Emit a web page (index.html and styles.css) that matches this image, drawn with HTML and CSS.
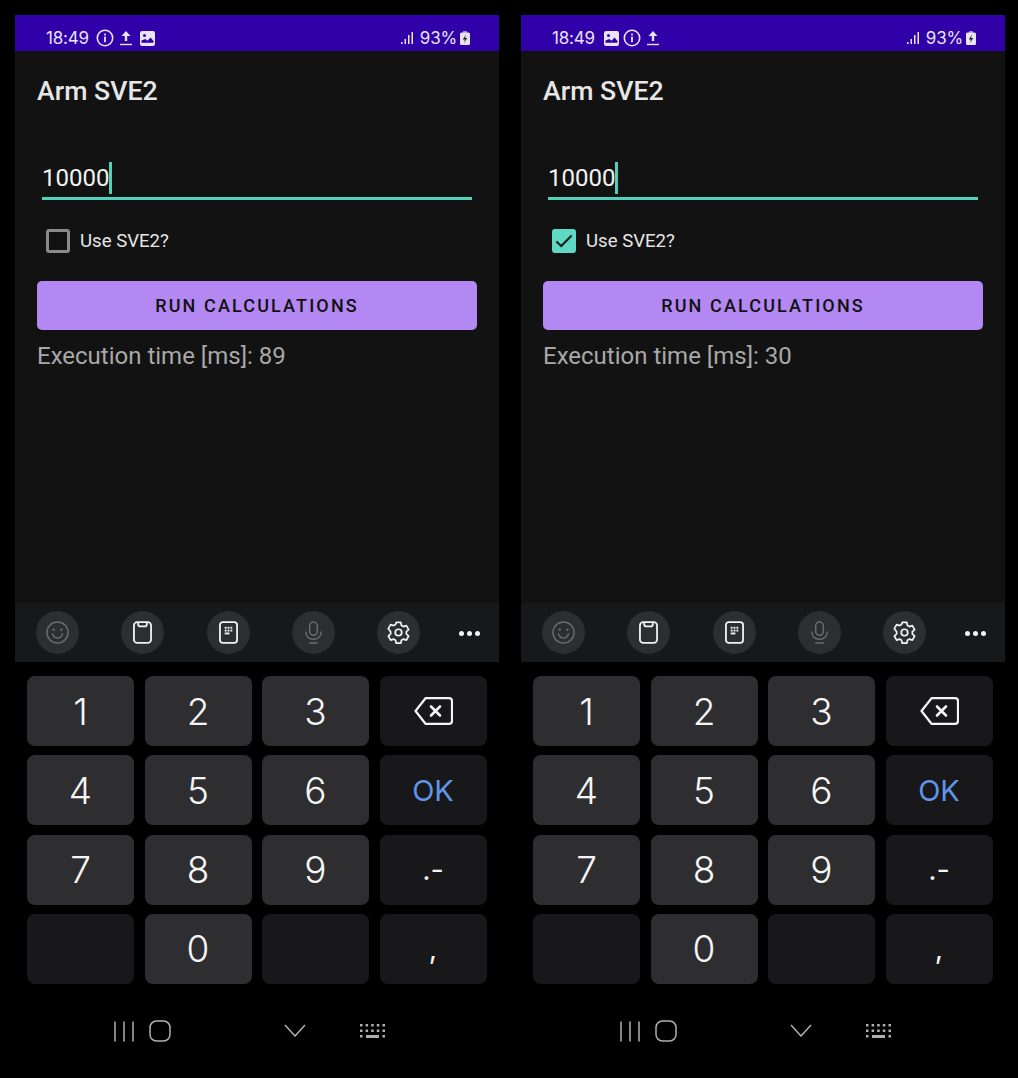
FILE: index.html
```html
<!DOCTYPE html>
<html>
<head>
    <title>Arm SVE2</title>
    <link rel="stylesheet" href="styles.css">
</head>
<body>
    <svg class="icon-defs" width="0" height="0">
        <defs>
            <symbol id="i-info" viewBox="0 0 18 18"><circle cx="9" cy="9" r="7.7" fill="none" stroke="currentColor" stroke-width="1.6"/><rect x="8.1" y="7.6" width="1.8" height="5.6" fill="currentColor"/><rect x="8.1" y="4.6" width="1.8" height="1.8" fill="currentColor"/></symbol>
            <symbol id="i-upload" viewBox="0 0 14 16"><path d="M7 1 11.5 6H8.2v5H5.8V6H2.5z" fill="currentColor"/><rect x="1" y="13.8" width="12" height="1.4" fill="currentColor"/></symbol>
            <symbol id="i-image" viewBox="0 0 15 15"><path fill-rule="evenodd" d="M2 0h11a2 2 0 0 1 2 2v11a2 2 0 0 1-2 2H2a2 2 0 0 1-2-2V2a2 2 0 0 1 2-2zM1.5 9.5v2.2h12V10L10.500 6.500 7.500 9.800 5.300 8z" fill="currentColor"/><circle cx="4.500" cy="4.500" r="1.500" fill="#3000a8"/></symbol>
            <symbol id="i-signal" viewBox="0 0 13 14"><rect x="0" y="11" width="1.500" height="2" fill="currentColor"/><rect x="3.500" y="8" width="1.500" height="5" fill="currentColor"/><rect x="7" y="4" width="1.500" height="9" fill="currentColor"/><rect x="10.500" y="1" width="1.500" height="12" fill="currentColor"/></symbol>
            <symbol id="i-battery" viewBox="0 0 10 14"><rect x="3" y="0" width="4" height="2" fill="#9a8fd0"/><rect x="0" y="1.500" width="10" height="12.500" rx="1.500" fill="currentColor"/><path d="M6 3.500 2.800 8.500H5L4 12 7.300 7H5z" fill="#222"/></symbol>
            <symbol id="i-smile" viewBox="0 0 24 24"><g fill="none" stroke="currentColor" stroke-width="1.500"><circle cx="12" cy="12" r="11"/><path d="M6.800 13.500c1 3 3 4.300 5.200 4.300s4.200-1.300 5.200-4.300" stroke-linecap="round"/></g><circle cx="8" cy="9" r="1.300" fill="currentColor"/><circle cx="16" cy="9" r="1.300" fill="currentColor"/></symbol>
            <symbol id="i-clip" viewBox="0 0 20 24"><g fill="none" stroke="currentColor" stroke-width="1.900"><rect x="1" y="1" width="18" height="22" rx="3.500"/><path d="M5.500 1v2.500a2 2 0 0 0 2 2h5a2 2 0 0 0 2-2V1"/></g></symbol>
            <symbol id="i-pad" viewBox="0 0 20 24"><rect x="1" y="1" width="18" height="22" rx="3" fill="none" stroke="currentColor" stroke-width="1.900"/><g fill="currentColor"><rect x="6" y="6" width="2" height="2"/><rect x="9" y="6" width="2" height="2"/><rect x="12" y="6" width="2" height="2"/><rect x="6" y="9" width="2" height="2"/><rect x="9" y="9" width="2" height="2"/><rect x="12" y="9" width="2" height="2"/><rect x="6" y="12" width="5" height="2"/></g></symbol>
            <symbol id="i-mic" viewBox="0 0 20 24"><g fill="none" stroke="currentColor" stroke-width="1.600" stroke-linecap="round"><rect x="6" y="1" width="8" height="14" rx="4"/><path d="M2 11.500c0 5 3.500 7.500 8 7.500s8-2.500 8-7.500M6 23h8"/></g></symbol>
            <symbol id="i-gear" viewBox="0 0 24 24"><g fill="none" stroke="currentColor" stroke-width="1.800" stroke-linejoin="round"><path d="M9.600 1.500h4.800l.7 3.200 2 1.100 3.100-1 2.400 4.200-2.400 2.200v2.300l2.400 2.200-2.400 4.200-3.100-1-2 1.100-.7 3.200H9.600l-.7-3.200-2-1.100-3.100 1-2.400-4.200 2.400-2.200v-2.300L1.400 8l2.400-4.200 3.100 1 2-1.100z"/><circle cx="12" cy="12" r="3.400"/></g></symbol>
            <symbol id="i-back" viewBox="0 0 39 28"><g fill="none" stroke="currentColor" stroke-width="2.200" stroke-linejoin="round" stroke-linecap="round"><path d="M11.500 1.200H35a3 3 0 0 1 3 3v19.600a3 3 0 0 1-3 3H11.500L1.500 14z"/><path d="M17 9.500l9 9M26 9.500l-9 9" stroke-width="2.600"/></g></symbol>
            <symbol id="i-recent" viewBox="0 0 20 21"><g stroke="currentColor" stroke-width="1.500" stroke-linecap="round"><path d="M1 1v19M10 1v19M19 1v19"/></g></symbol>
            <symbol id="i-home" viewBox="0 0 22 22"><rect x="1" y="1" width="20" height="20" rx="6.500" fill="none" stroke="currentColor" stroke-width="1.500"/></symbol>
            <symbol id="i-down" viewBox="0 0 22 13"><path d="M1 1l10 11L21 1" fill="none" stroke="currentColor" stroke-width="1.500"/></symbol>
            <symbol id="i-kbd" viewBox="0 0 25 14"><g fill="currentColor"><rect x="0" y="0" width="2.500" height="2.500"/><rect x="5.600" y="0" width="2.500" height="2.500"/><rect x="11.200" y="0" width="2.500" height="2.500"/><rect x="16.800" y="0" width="2.500" height="2.500"/><rect x="22.500" y="0" width="2.500" height="2.500"/><rect x="0" y="5.500" width="2.500" height="2.500"/><rect x="5.600" y="5.500" width="2.500" height="2.500"/><rect x="11.200" y="5.500" width="2.500" height="2.500"/><rect x="16.800" y="5.500" width="2.500" height="2.500"/><rect x="22.500" y="5.500" width="2.500" height="2.500"/><rect x="0" y="11" width="2.500" height="2.500"/><rect x="6" y="11" width="13" height="3"/><rect x="22.500" y="11" width="2.500" height="2.500"/></g></symbol>
        </defs>
    </svg>

    <div class="phones">
        <!-- without SVE2 -->
        <div class="phone">
            <div class="status-bar">
                <span class="clock">18:49</span>
                <svg class="st-info"><use href="#i-info"/></svg>
                <svg class="st-upload"><use href="#i-upload"/></svg>
                <svg class="st-image"><use href="#i-image"/></svg>
                <span class="status-right">
                    <svg class="st-signal"><use href="#i-signal"/></svg>
                    <span class="battery-text">93%</span>
                    <svg class="st-battery"><use href="#i-battery"/></svg>
                </span>
            </div>
            <div class="app">
                <h1 class="app-title">Arm SVE2</h1>
                <div class="field"><span class="field-value">10000</span><span class="caret"></span></div>
                <div class="check-row">
                    <span class="checkbox"></span>
                    <span class="check-label">Use SVE2?</span>
                </div>
                <button class="run-button">RUN CALCULATIONS</button>
                <p class="result">Execution time [ms]: 89</p>
            </div>
            <div class="toolbar">
                <span class="tool dim"><svg><use href="#i-smile"/></svg></span>
                <span class="tool"><svg class="narrow"><use href="#i-clip"/></svg></span>
                <span class="tool"><svg class="narrow"><use href="#i-pad"/></svg></span>
                <span class="tool dim"><svg class="narrow"><use href="#i-mic"/></svg></span>
                <span class="tool"><svg><use href="#i-gear"/></svg></span>
                <span class="more"><i></i><i></i><i></i></span>
            </div>
            <div class="keys">
                <div class="key">1</div>
                <div class="key">2</div>
                <div class="key">3</div>
                <div class="key fn"><svg class="back-icon"><use href="#i-back"/></svg></div>
                <div class="key">4</div>
                <div class="key">5</div>
                <div class="key">6</div>
                <div class="key fn ok">OK</div>
                <div class="key">7</div>
                <div class="key">8</div>
                <div class="key">9</div>
                <div class="key fn sym">.-</div>
                <div class="key fn"></div>
                <div class="key">0</div>
                <div class="key fn"></div>
                <div class="key fn sym">,</div>
            </div>
            <div class="nav-bar">
                <svg class="nav-recent"><use href="#i-recent"/></svg>
                <svg class="nav-home"><use href="#i-home"/></svg>
                <svg class="nav-down"><use href="#i-down"/></svg>
                <svg class="nav-kbd"><use href="#i-kbd"/></svg>
            </div>
        </div>

        <!-- with SVE2 -->
        <div class="phone">
            <div class="status-bar">
                <span class="clock">18:49</span>
                <svg class="st-image first"><use href="#i-image"/></svg>
                <svg class="st-info"><use href="#i-info"/></svg>
                <svg class="st-upload"><use href="#i-upload"/></svg>
                <span class="status-right">
                    <svg class="st-signal"><use href="#i-signal"/></svg>
                    <span class="battery-text">93%</span>
                    <svg class="st-battery"><use href="#i-battery"/></svg>
                </span>
            </div>
            <div class="app">
                <h1 class="app-title">Arm SVE2</h1>
                <div class="field"><span class="field-value">10000</span><span class="caret"></span></div>
                <div class="check-row">
                    <span class="checkbox checked">
                        <svg viewBox="0 0 20 15"><path d="M1.500 8 7 13 18.500 1.500" fill="none" stroke="#14201e" stroke-width="2.400"/></svg>
                    </span>
                    <span class="check-label">Use SVE2?</span>
                </div>
                <button class="run-button">RUN CALCULATIONS</button>
                <p class="result">Execution time [ms]: 30</p>
            </div>
            <div class="toolbar">
                <span class="tool dim"><svg><use href="#i-smile"/></svg></span>
                <span class="tool"><svg class="narrow"><use href="#i-clip"/></svg></span>
                <span class="tool"><svg class="narrow"><use href="#i-pad"/></svg></span>
                <span class="tool dim"><svg class="narrow"><use href="#i-mic"/></svg></span>
                <span class="tool"><svg><use href="#i-gear"/></svg></span>
                <span class="more"><i></i><i></i><i></i></span>
            </div>
            <div class="keys">
                <div class="key">1</div>
                <div class="key">2</div>
                <div class="key">3</div>
                <div class="key fn"><svg class="back-icon"><use href="#i-back"/></svg></div>
                <div class="key">4</div>
                <div class="key">5</div>
                <div class="key">6</div>
                <div class="key fn ok">OK</div>
                <div class="key">7</div>
                <div class="key">8</div>
                <div class="key">9</div>
                <div class="key fn sym">.-</div>
                <div class="key fn"></div>
                <div class="key">0</div>
                <div class="key fn"></div>
                <div class="key fn sym">,</div>
            </div>
            <div class="nav-bar">
                <svg class="nav-recent"><use href="#i-recent"/></svg>
                <svg class="nav-home"><use href="#i-home"/></svg>
                <svg class="nav-down"><use href="#i-down"/></svg>
                <svg class="nav-kbd"><use href="#i-kbd"/></svg>
            </div>
        </div>
    </div>
</body>
</html>
```

FILE: styles.css
```css
body {
    margin: 0;
    background-color: #000;
    font-family: Roboto, "Liberation Sans", sans-serif;
}

.icon-defs {
    display: none;
}

.phones {
    display: flex;
    gap: 22px;
    padding: 15px 13px 0 15px;
}

.phone {
    width: 484px;
    height: 1048px;
    display: flex;
    flex-direction: column;
    background-color: #000;
}

.status-bar {
    height: 36px;
    background-color: #3000a8;
    color: #e8e4f6;
    display: flex;
    align-items: center;
    padding: 10px 29px 0 31px;
    box-sizing: border-box;
    font-family: Inter, sans-serif;
    flex-shrink: 0;
}

.clock {
    font-size: 17px;
    margin-right: 7px;
    letter-spacing: -0.2px;
}

.st-info {
    width: 18px;
    height: 18px;
    margin-right: 5px;
}

.st-upload {
    width: 14px;
    height: 16px;
    margin-right: 7px;
}

.st-image {
    width: 15px;
    height: 15px;
}

.st-image.first {
    margin: 0 4px 0 2px;
}

.status-right {
    margin-left: auto;
    display: flex;
    align-items: center;
}

.st-signal {
    width: 13px;
    height: 14px;
    margin-right: 6px;
}

.battery-text {
    font-size: 17px;
    letter-spacing: -0.2px;
}

.st-battery {
    width: 10px;
    height: 14px;
    margin-left: 3px;
}

.app {
    height: 552px;
    background-color: #121212;
    padding: 0 22px;
    flex-shrink: 0;
    box-sizing: border-box;
}

.app-title {
    margin: 0;
    padding-top: 25px;
    font-size: 26.7px;
    line-height: 30px;
    font-weight: 500;
    color: #e6e6e6;
}

.field {
    margin: 53px 5px 0 5px;
    height: 38px;
    display: flex;
    align-items: center;
    border-bottom: 3px solid #4fd1bb;
}

.field-value {
    font-size: 24px;
    color: #f2f2f2;
}

.caret {
    width: 3px;
    height: 32px;
    background-color: #4fd1bb;
}

.check-row {
    display: flex;
    align-items: center;
    margin: 28px 0 0 9px;
    height: 26px;
}

.checkbox {
    width: 18px;
    height: 18px;
    border: 3px solid #8a8a8a;
    border-radius: 3px;
    margin-right: 10px;
    display: flex;
    align-items: center;
    justify-content: center;
}

.checkbox.checked {
    border-color: #5fd9c3;
    background-color: #5fd9c3;
}

.checkbox.checked svg {
    width: 18px;
    height: 14px;
    flex-shrink: 0;
}

.check-label {
    font-size: 18.6px;
    color: #e6e6e6;
}

.run-button {
    display: block;
    width: 100%;
    height: 49px;
    margin-top: 27px;
    border: none;
    border-radius: 5px;
    background-color: #b388f2;
    color: #111;
    font-family: Roboto, sans-serif;
    font-size: 18px;
    font-weight: 500;
    letter-spacing: 2.13px;
    cursor: pointer;
}

.result {
    margin: 11px 0 0 0;
    font-size: 24px;
    line-height: 30px;
    color: #a8a8a8;
}

.toolbar {
    height: 59px;
    background-color: #17181a;
    display: flex;
    align-items: center;
    padding-left: 21px;
    gap: 42.25px;
    flex-shrink: 0;
}

.tool {
    width: 43px;
    height: 43px;
    border-radius: 50%;
    background-color: #2d2e30;
    color: #f2f2f2;
    display: flex;
    align-items: center;
    justify-content: center;
}

.tool svg {
    width: 23px;
    height: 23px;
}

.tool svg.narrow {
    width: 19px;
    height: 23px;
}

.tool.dim {
    color: #6a6b6d;
}

.more {
    display: flex;
    gap: 3px;
    margin: 1px 0 0 -3px;
}

.more i {
    width: 5px;
    height: 5px;
    border-radius: 50%;
    background-color: #f2f2f2;
}

.keys {
    display: grid;
    grid-template-columns: repeat(4, 107px);
    grid-auto-rows: 70px;
    column-gap: 10.5px;
    row-gap: 9.33px;
    padding: 14px 12px 0 12px;
}

.key {
    background-color: #2e2e30;
    border-radius: 8px;
    color: #f5f5f5;
    font-family: Inter, sans-serif;
    font-size: 37px;
    font-weight: 300;
    display: flex;
    align-items: center;
    justify-content: center;
}

.key.fn {
    background-color: #18181a;
}

.key.ok {
    color: #6195ea;
    font-size: 29px;
    font-weight: 400;
}

.key.sym {
    font-size: 29px;
    font-weight: 400;
}

.back-icon {
    width: 39px;
    height: 28px;
}

.nav-bar {
    flex: 1;
    display: flex;
    align-items: flex-start;
    padding: 36px 0 0 99px;
    color: #b0b0b0;
}

.nav-recent {
    width: 20px;
    height: 21px;
    margin-top: 1px;
}

.nav-home {
    width: 22px;
    height: 22px;
    margin-left: 15px;
}

.nav-down {
    width: 22px;
    height: 13px;
    margin: 4px 0 0 113px;
}

.nav-kbd {
    width: 25px;
    height: 14px;
    margin: 4px 0 0 54px;
}
```
